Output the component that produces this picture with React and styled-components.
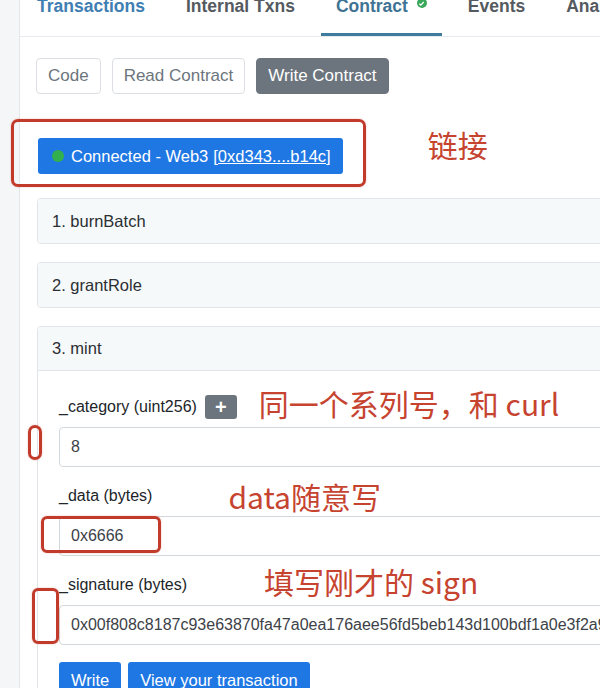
import React from "react";
import styled, { createGlobalStyle } from "styled-components";

const Global = createGlobalStyle`
  html, body { margin: 0; padding: 0; background: #ffffff; overflow: hidden; }
  body { font-family: "Liberation Sans", Arial, Helvetica, sans-serif; }
  * { box-sizing: border-box; }
`;

const Page = styled.div`
  position: relative;
  display: flex;
  width: 600px;
  height: 688px;
  overflow: hidden;
  background: #fff;
`;

const SideRail = styled.div`
  flex: 0 0 20px;
  background: #f4f6f8;
  border-right: 1px solid #e3e6ea;
`;

const Main = styled.div`
  flex: 1;
  min-width: 0;
  display: flex;
  flex-direction: column;
`;

const TabBar = styled.div`
  display: flex;
  gap: 11px;
  padding-left: 2px;
  margin-top: -4px;
  height: 41px;
  border-bottom: 1px solid #e7eaee;
  white-space: nowrap;
`;

const Tab = styled.div`
  display: flex;
  align-items: flex-start;
  height: 40px;
  padding: 0 15px;
  font-size: 17.5px;
  font-weight: 700;
  line-height: 20px;
  color: ${(p) => p.$color || "#555a60"};
  border-bottom: 3px solid ${(p) => (p.$active ? "#3f7b9c" : "transparent")};
`;

const TabBadge = styled.span`
  display: inline-flex;
  align-items: center;
  justify-content: center;
  width: 10px;
  height: 10px;
  margin: 2px 0 0 9px;
  border-radius: 50%;
  background: #3aa85a;
`;

const Content = styled.div`
  width: 720px;
  padding: 21px 0 0 16px;
`;

const ButtonRow = styled.div`
  display: flex;
  gap: 11px;
`;

const NavButton = styled.div`
  height: 36px;
  padding: 0 11px;
  display: flex;
  align-items: center;
  font-size: 17px;
  border-radius: 4px;
  border: 1px solid ${(p) => (p.$active ? "#6c757d" : "#dcdfe3")};
  background: ${(p) => (p.$active ? "#6c757d" : "#fff")};
  color: ${(p) => (p.$active ? "#fff" : "#6c757d")};
`;

const ConnectRow = styled.div`
  display: flex;
  align-items: flex-start;
  margin-top: 44px;
  padding-left: 2px;
`;

const ConnectButton = styled.div`
  height: 36px;
  display: flex;
  align-items: center;
  padding: 0 12px 0 14px;
  background: #1f77e3;
  border-radius: 3px;
  color: #fff;
  font-size: 16.5px;
  white-space: nowrap;
`;

const Dot = styled.span`
  width: 12px;
  height: 12px;
  border-radius: 50%;
  background: #33b04e;
  margin-right: 7px;
`;

const Addr = styled.span`
  text-decoration: underline;
  margin-left: 5px;
`;

const Note = styled.span`
  font-family: "Noto Sans CJK SC", "Noto Sans", sans-serif;
  font-size: 30px;
  line-height: 36px;
  color: #c6432f;
  white-space: pre;
  margin-left: ${(p) => p.$gap || 0}px;
  margin-top: ${(p) => p.$top || 0}px;
  margin-bottom: ${(p) => p.$lift || 0}px;
`;

const CardList = styled.div`
  display: flex;
  flex-direction: column;
  gap: 18px;
  margin-top: 24px;
  padding-left: 1px;
`;

const Card = styled.div`
  border: 1px solid #e1e5e9;
  border-radius: 4px;
  background: #fff;
  overflow: hidden;
`;

const CardHeader = styled.div`
  height: 44px;
  display: flex;
  align-items: center;
  padding: 0 14px;
  background: #f6f9fa;
  font-size: 16.5px;
  color: #2b2f33;
  border-bottom: ${(p) => (p.$open ? "1px solid #e1e5e9" : "none")};
`;

const CardBody = styled.div`
  padding: 24px 0 0 21px;
  display: flex;
  flex-direction: column;
  gap: 17px;
`;

const Field = styled.div`
  display: flex;
  flex-direction: column;
  gap: 8px;
`;

const LabelRow = styled.div`
  height: 24px;
  display: flex;
  align-items: center;
`;

const Label = styled.span`
  font-size: 16px;
  color: #212529;
  white-space: nowrap;
`;

const AddButton = styled.span`
  width: 32px;
  height: 24px;
  margin-left: 8px;
  display: inline-flex;
  align-items: center;
  justify-content: center;
  background: #6c757d;
  border-radius: 3px;
  color: #fff;
  font-size: 20px;
  font-weight: 700;
  line-height: 1;
`;

const Input = styled.input`
  height: 40px;
  width: 100%;
  margin: 0;
  border: 1px solid #d3d8dd;
  border-radius: 4px;
  padding: 0 11px;
  font-family: "Liberation Sans", Arial, sans-serif;
  font-size: 16px;
  color: #3d4248;
  background: #fff;
  outline: none;
`;

const Actions = styled.div`
  display: flex;
  gap: 7px;
  margin-top: 0;
`;

const ActionButton = styled.div`
  height: 36px;
  padding: 0 12px;
  display: flex;
  align-items: center;
  background: #1f77e3;
  border-radius: 3px;
  color: #fff;
  font-size: 16.5px;
  white-space: nowrap;
`;

const RedBox = styled.div`
  position: absolute;
  left: ${(p) => p.$x}px;
  top: ${(p) => p.$y}px;
  width: ${(p) => p.$w}px;
  height: ${(p) => p.$h}px;
  border: 3px solid #c23a2a;
  border-radius: ${(p) => p.$r || 6}px;
  box-shadow: 0 0 2px rgba(194, 58, 42, 0.35);
  pointer-events: none;
`;

const tabs = [
  { label: "Transactions", color: "#3e7eb3" },
  { label: "Internal Txns" },
  { label: "Contract", color: "#3f7394", active: true, badge: true },
  { label: "Events" },
  { label: "Analytics" },
];

export default function App() {
  return (
    <>
      <Global />
      <Page>
        <SideRail />
        <Main>
          <TabBar>
            {tabs.map((t) => (
              <Tab key={t.label} $color={t.color} $active={t.active}>
                {t.label}
                {t.badge && (
                  <TabBadge>
                    <svg width="7" height="7" viewBox="0 0 8 8">
                      <path d="M1.5 4.2 L3.3 5.8 L6.5 2.3" stroke="#fff" strokeWidth="1.4" fill="none" />
                    </svg>
                  </TabBadge>
                )}
              </Tab>
            ))}
          </TabBar>
          <Content>
            <ButtonRow>
              <NavButton>Code</NavButton>
              <NavButton>Read Contract</NavButton>
              <NavButton $active>Write Contract</NavButton>
            </ButtonRow>

            <ConnectRow>
              <ConnectButton>
                <Dot />
                Connected - Web3<Addr>[0xd343....b14c]</Addr>
              </ConnectButton>
              <Note $gap={85} $top={-12}>链接</Note>
            </ConnectRow>

            <CardList>
              <Card>
                <CardHeader>1. burnBatch</CardHeader>
              </Card>
              <Card>
                <CardHeader>2. grantRole</CardHeader>
              </Card>
              <Card>
                <CardHeader $open>3. mint</CardHeader>
                <CardBody>
                  <Field>
                    <LabelRow>
                      <Label>_category (uint256)</Label>
                      <AddButton>+</AddButton>
                      <Note $gap={22} $lift={8}>同一个系列号，和 curl</Note>
                    </LabelRow>
                    <Input readOnly value="8" />
                  </Field>
                  <Field>
                    <LabelRow>
                      <Label>_data (bytes)</Label>
                      <Note $gap={76}>data随意写</Note>
                    </LabelRow>
                    <Input readOnly value="0x6666" />
                  </Field>
                  <Field>
                    <LabelRow>
                      <Label>_signature (bytes)</Label>
                      <Note $gap={77} $lift={8}>填写刚才的 sign</Note>
                    </LabelRow>
                    <Input
                      readOnly
                      value="0x00f808c8187c93e63870fa47a0ea176aee56fd5beb143d100bdf1a0e3f2a91c7"
                    />
                  </Field>
                  <Actions>
                    <ActionButton>Write</ActionButton>
                    <ActionButton>View your transaction</ActionButton>
                  </Actions>
                </CardBody>
              </Card>
            </CardList>
          </Content>
        </Main>

        <RedBox $x={11} $y={119} $w={355} $h={68} $r={7} />
        <RedBox $x={28} $y={425} $w={14} $h={35} $r={7} />
        <RedBox $x={41} $y={516} $w={120} $h={37} $r={6} />
        <RedBox $x={32} $y={588} $w={27} $h={56} $r={6} />
      </Page>
    </>
  );
}
